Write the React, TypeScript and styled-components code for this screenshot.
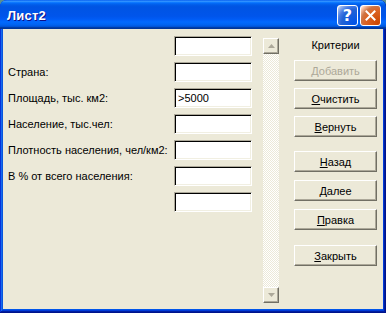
import React from "react";
import styled, { createGlobalStyle } from "styled-components";

const Global = createGlobalStyle`
	html, body {
		margin: 0;
		padding: 0;
		background: #5a8f8f;
	}
	body {
		font-family: "Liberation Sans", Arial, sans-serif;
		font-size: 11px;
	}
`;

const Frame = styled.div`
	width: 386px;
	height: 313px;
	box-sizing: border-box;
	display: flex;
	flex-direction: column;
	background: #0055ea;
	border-radius: 7px 7px 0 0;
	overflow: hidden;
	box-shadow: inset -1px -1px #00138c, inset 1px 1px #0831d9,
		inset -2px -2px #001ea0, inset 2px 2px #166aee,
		inset -3px -3px #003bda, inset 3px 3px #0855dd;
`;

const TitleBar = styled.div`
	flex: 0 0 29px;
	display: flex;
	align-items: center;
	padding: 2px 5px 0 7px;
	box-sizing: border-box;
	background: linear-gradient(to bottom, #0058ee 0%, #3593ff 4%, #288eff 6%, #127dff 8%,
		#036ffc 10%, #0262ee 14%, #0057e5 20%, #0054e3 24%, #0055eb 56%, #005bf5 66%,
		#026afe 76%, #0062ef 86%, #0052d6 92%, #0040ab 94%, #003092 100%);
	.title {
		flex: 1 1 auto;
		color: white;
		font-weight: bold;
		font-size: 13px;
		letter-spacing: 0.2px;
		text-shadow: 1px 1px #0f1089;
	}
`;

const CaptionButton = styled.div<{ $kind: "help" | "close" }>`
	width: 21px;
	height: 21px;
	box-sizing: border-box;
	margin-left: 2px;
	border: 1px solid #fff;
	border-radius: 3px;
	display: flex;
	align-items: center;
	justify-content: center;
	color: white;
	font-weight: bold;
	font-size: 16px;
	font-family: "DejaVu Sans", sans-serif;
	background: ${(p) =>
		p.$kind === "close"
			? "radial-gradient(circle at 90% 90%, #cc4600 0%, #dc6527 55%, #cd7546 70%, #ffccb2 90%, #fff 100%)"
			: "radial-gradient(circle at 90% 90%, #0054e9 0%, #2263d5 55%, #4479e4 70%, #a3bbec 90%, #fff 100%)"};
`;

const Body = styled.div`
	flex: 1 1 auto;
	margin: 0 3px 4px 3px;
	background: #ece9d8;
	display: flex;
	align-items: flex-start;
	padding: 7px 0 0 5px;
`;

const Form = styled.div`
	display: flex;
	flex-direction: column;
	gap: 6px;
`;

const Row = styled.div`
	display: flex;
	align-items: center;
	height: 20px;
`;

const Label = styled.span`
	width: 166px;
	color: #000;
	white-space: nowrap;
`;

const TextBox = styled.div`
	width: 78px;
	height: 20px;
	box-sizing: border-box;
	background: #fff;
	border: 1px solid;
	border-color: #aca899 #fff #fff #aca899;
	box-shadow: inset 1px 1px #000, inset -1px -1px #f1efe2;
	padding: 3px 0 0 3px;
	color: #000;
`;

const ScrollBar = styled.div`
	margin: 2px 0 0 11px;
	width: 16px;
	height: 265px;
	display: flex;
	flex-direction: column;
	justify-content: space-between;
	background-color: #fff;
	background-image: repeating-conic-gradient(#ece9d8 0 25%, #fff 0 50%);
	background-size: 2px 2px;
`;

const ArrowButton = styled.div`
	width: 16px;
	height: 16px;
	box-sizing: border-box;
	background: #ece9d8;
	border: 1px solid;
	border-color: #fff #716f64 #716f64 #fff;
	box-shadow: inset -1px -1px #aca899;
	display: flex;
	align-items: center;
	justify-content: center;
`;

const Side = styled.div`
	margin-left: 15px;
	width: 83px;
	display: flex;
	flex-direction: column;
	align-items: stretch;
	.caption {
		height: 16px;
		margin-top: 1px;
		line-height: 16px;
		text-align: center;
		color: #000;
	}
`;

const Button = styled.div<{ $gap: number; $disabled?: boolean }>`
	margin-top: ${(p) => p.$gap}px;
	height: 21px;
	box-sizing: border-box;
	background: #ece9d8;
	border: 1px solid;
	border-color: #fff #716f64 #716f64 #fff;
	box-shadow: inset -1px -1px #aca899;
	display: flex;
	align-items: center;
	justify-content: center;
	color: ${(p) => (p.$disabled ? "#aca899" : "#000")};
	u {
		text-decoration: ${(p) => (p.$disabled ? "none" : "underline")};
	}
`;

const Arrow: React.FC<{ up?: boolean }> = ({ up }) => (
	<svg width="7" height="4" viewBox="0 0 7 4">
		<polygon points={up ? "0,4 7,4 3.5,0" : "0,0 7,0 3.5,4"} fill="#aca899" />
	</svg>
);

const rows = ["", "Страна:", "Площадь, тыс. км2:", "Население, тыс.чел:", "Плотность населения, чел/км2:", "В % от всего населения:", ""];
const values = ["", "", ">5000", "", "", "", ""];

const buttons = [
	{ text: "Добавить", gap: 7, disabled: true },
	{ text: "Очистить", gap: 7 },
	{ text: "Вернуть", gap: 7 },
	{ text: "Назад", gap: 14 },
	{ text: "Далее", gap: 8 },
	{ text: "Правка", gap: 8 },
	{ text: "Закрыть", gap: 15 },
];

const App: React.FC = () => {
	return (
		<>
			<Global />
			<Frame>
				<TitleBar>
					<span className="title">Лист2</span>
					<CaptionButton $kind="help">?</CaptionButton>
					<CaptionButton $kind="close">
						<svg width="11" height="11" viewBox="0 0 11 11">
							<path d="M1.5 1.5 L9.5 9.5 M9.5 1.5 L1.5 9.5" stroke="#fff" strokeWidth="2" strokeLinecap="square" />
						</svg>
					</CaptionButton>
				</TitleBar>
				<Body>
					<Form>
						{rows.map((label, i) => (
							<Row key={i}>
								<Label>{label}</Label>
								<TextBox>{values[i]}</TextBox>
							</Row>
						))}
					</Form>
					<ScrollBar>
						<ArrowButton><Arrow up /></ArrowButton>
						<ArrowButton><Arrow /></ArrowButton>
					</ScrollBar>
					<Side>
						<div className="caption">Критерии</div>
						{buttons.map((b) => (
							<Button key={b.text} $gap={b.gap} $disabled={b.disabled}>
								<span><u>{b.text[0]}</u>{b.text.slice(1)}</span>
							</Button>
						))}
					</Side>
				</Body>
			</Frame>
		</>
	);
};

export default App;
